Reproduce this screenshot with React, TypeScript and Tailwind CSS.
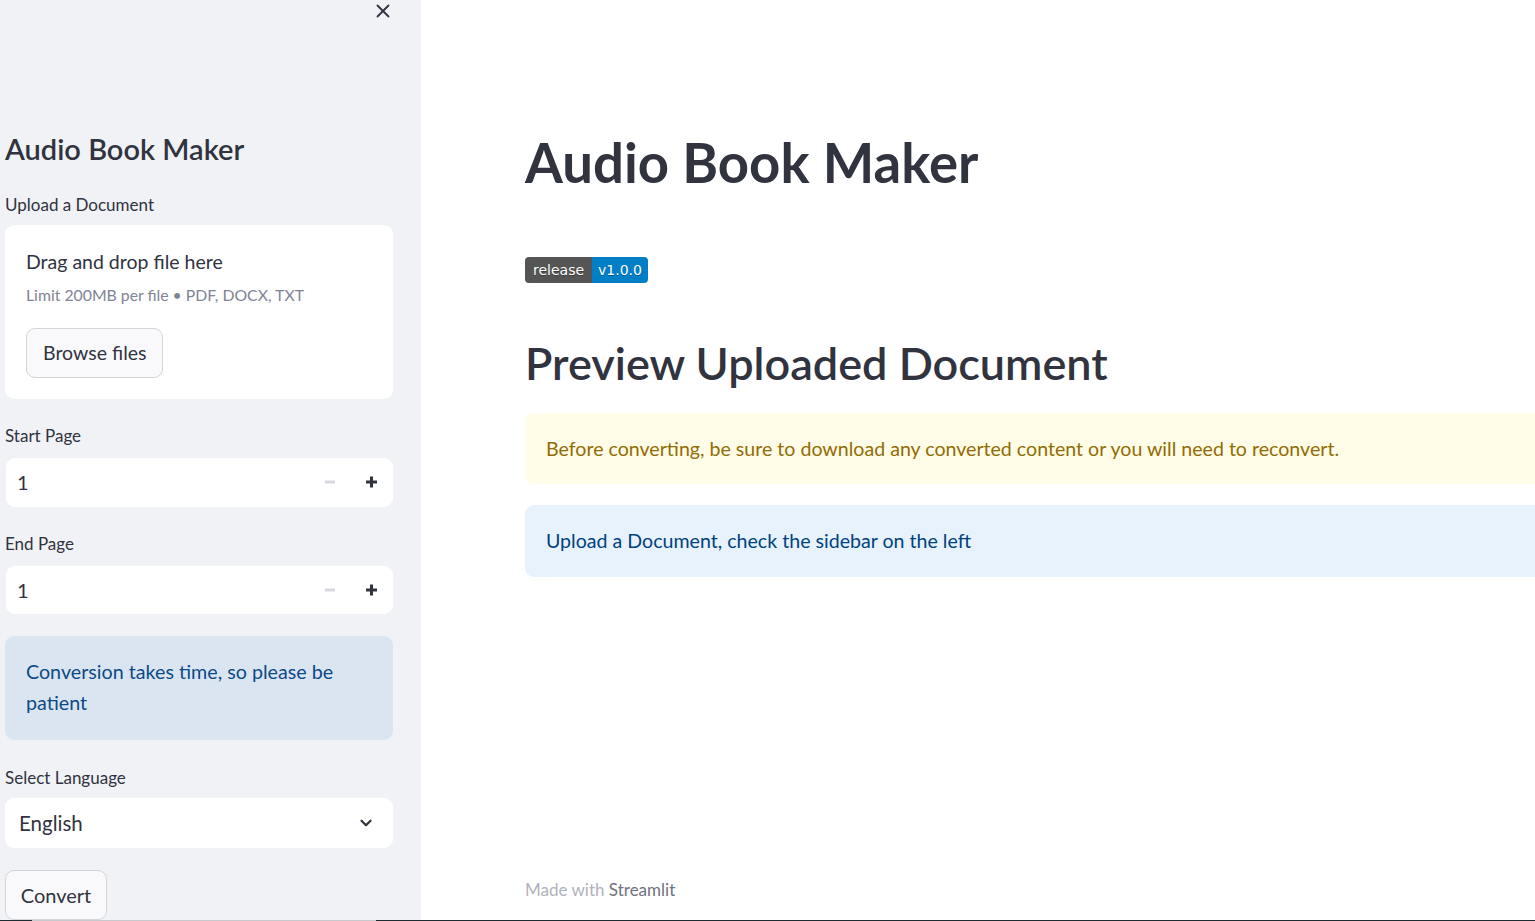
import { X, ChevronDown } from 'lucide-react';

const font = { fontFamily: 'Lato, "Noto Sans", sans-serif' };

function Stepper() {
  return (
    <svg className="w-[52px] h-[14px]" viewBox="0 0 52 14" fill="none" strokeWidth={3}>
      <path d="M0 7h10" stroke="#d5d8df" />
      <path d="M41 7h11M46.5 1.5v11" stroke="#31333f" />
    </svg>
  );
}

function NumberField({ label }: { label: string }) {
  return (
    <>
      <div className="mt-[27px] text-[17px] leading-[20px] text-[#31333f]">{label}</div>
      <div className="mt-[12px] h-[50px] w-[387px] ml-px rounded-[9px] bg-white flex items-center pl-[11px] pr-[16px]">
        <span className="flex-1 text-[20px] text-[#31333f]">1</span>
        <Stepper />
      </div>
    </>
  );
}

function Sidebar() {
  return (
    <aside className="w-[421px] shrink-0 bg-[#f0f2f6] pl-[5px] flex flex-col overflow-hidden">
      <div className="h-[22px] w-[388px] flex justify-end items-start">
        <X className="w-[22px] h-[22px] text-[#31333f] -mr-[1px]" strokeWidth={2} />
      </div>

      <h1 className="mt-[107px] text-[29px] leading-[40px] font-semibold text-[#31333f]">Audio Book Maker</h1>

      <div className="mt-[26px] text-[17px] leading-[20px] text-[#31333f]">Upload a Document</div>
      <div className="mt-[10px] w-[388px] h-[174px] shrink-0 rounded-[9px] bg-white pl-[21px] pt-[23px]">
        <div className="text-[19.5px] leading-[28px] text-[#31333f]">Drag and drop file here</div>
        <div className="mt-[9px] text-[15.8px] leading-[20px] text-[#808495]">Limit 200MB per file • PDF, DOCX, TXT</div>
        <button className="mt-[23px] h-[50px] px-[16px] rounded-[9px] border border-[#d3d5db] bg-[#f9f9fb] text-[19.5px] text-[#31333f]">
          Browse files
        </button>
      </div>

      <NumberField label="Start Page" />
      <NumberField label="End Page" />

      <div className="mt-[22px] w-[388px] rounded-[9px] bg-[#dbe5f2] px-[21px] pt-[20px] pb-[22px] text-[19.7px] leading-[31px] text-[#0b4a86]">
        Conversion takes time, so please be patient
      </div>

      <div className="mt-[28px] text-[17px] leading-[20px] text-[#31333f]">Select Language</div>
      <div className="mt-[10px] w-[388px] h-[50px] shrink-0 rounded-[9px] bg-white flex items-center pl-[14px] pr-[18px]">
        <span className="flex-1 text-[20.5px] text-[#31333f]">English</span>
        <ChevronDown className="w-[18px] h-[18px] text-[#31333f]" strokeWidth={3} />
      </div>

      <button className="mt-[22px] w-[102px] h-[50px] shrink-0 rounded-[9px] border border-[#d3d5db] bg-[#f9f9fb] text-[20px] text-[#31333f]">
        Convert
      </button>
    </aside>
  );
}

function Badge() {
  const shadow = { textShadow: '0 1px 0 rgba(1,1,1,0.3)', fontFamily: '"DejaVu Sans", Verdana, sans-serif' };
  return (
    <div className="flex h-[26px] w-fit rounded-[4px] overflow-hidden text-[14px] text-white">
      <span className="bg-[#555555] px-[8px] flex items-center" style={shadow}>release</span>
      <span className="bg-[#007ec6] px-[6px] flex items-center" style={shadow}>v1.0.0</span>
    </div>
  );
}

function Main() {
  return (
    <main className="flex-1 bg-white pl-[104px] flex flex-col overflow-hidden">
      <h1 className="mt-[126px] text-[54.5px] leading-[72px] font-bold text-[#31333f] whitespace-nowrap">Audio Book Maker</h1>
      <div className="mt-[59px]">
        <Badge />
      </div>
      <h2 className="mt-[52px] text-[45px] leading-[56px] font-semibold text-[#31333f] whitespace-nowrap">
        Preview Uploaded Document
      </h2>
      <div className="mt-[22px] w-[1100px] h-[71px] shrink-0 rounded-[9px] bg-[#fffce7] pl-[21px] flex items-center text-[19.6px] text-[#926c05] whitespace-nowrap">
        Before converting, be sure to download any converted content or you will need to reconvert.
      </div>
      <div className="mt-[21px] w-[1100px] h-[72px] shrink-0 rounded-[9px] bg-[#e8f2fc] pl-[21px] flex items-center text-[19.6px] text-[#004280] whitespace-nowrap">
        Upload a Document, check the sidebar on the left
      </div>
      <div className="mt-auto mb-[18px] text-[17px] text-[#b0b3bb]">
        Made with <span className="text-[#6f7280]">Streamlit</span>
      </div>
    </main>
  );
}

export default function App() {
  return (
    <div className="w-[1535px] h-[921px] flex flex-col overflow-hidden" style={font}>
      <div className="flex flex-1 min-h-0">
        <Sidebar />
        <Main />
      </div>
      <div className="h-px flex shrink-0">
        <div className="w-[32px] bg-[#1e2b30]" />
        <div className="w-[344px] bg-[#c7c9cc]" />
        <div className="flex-1 bg-[#1e2b30]" />
      </div>
    </div>
  );
}
